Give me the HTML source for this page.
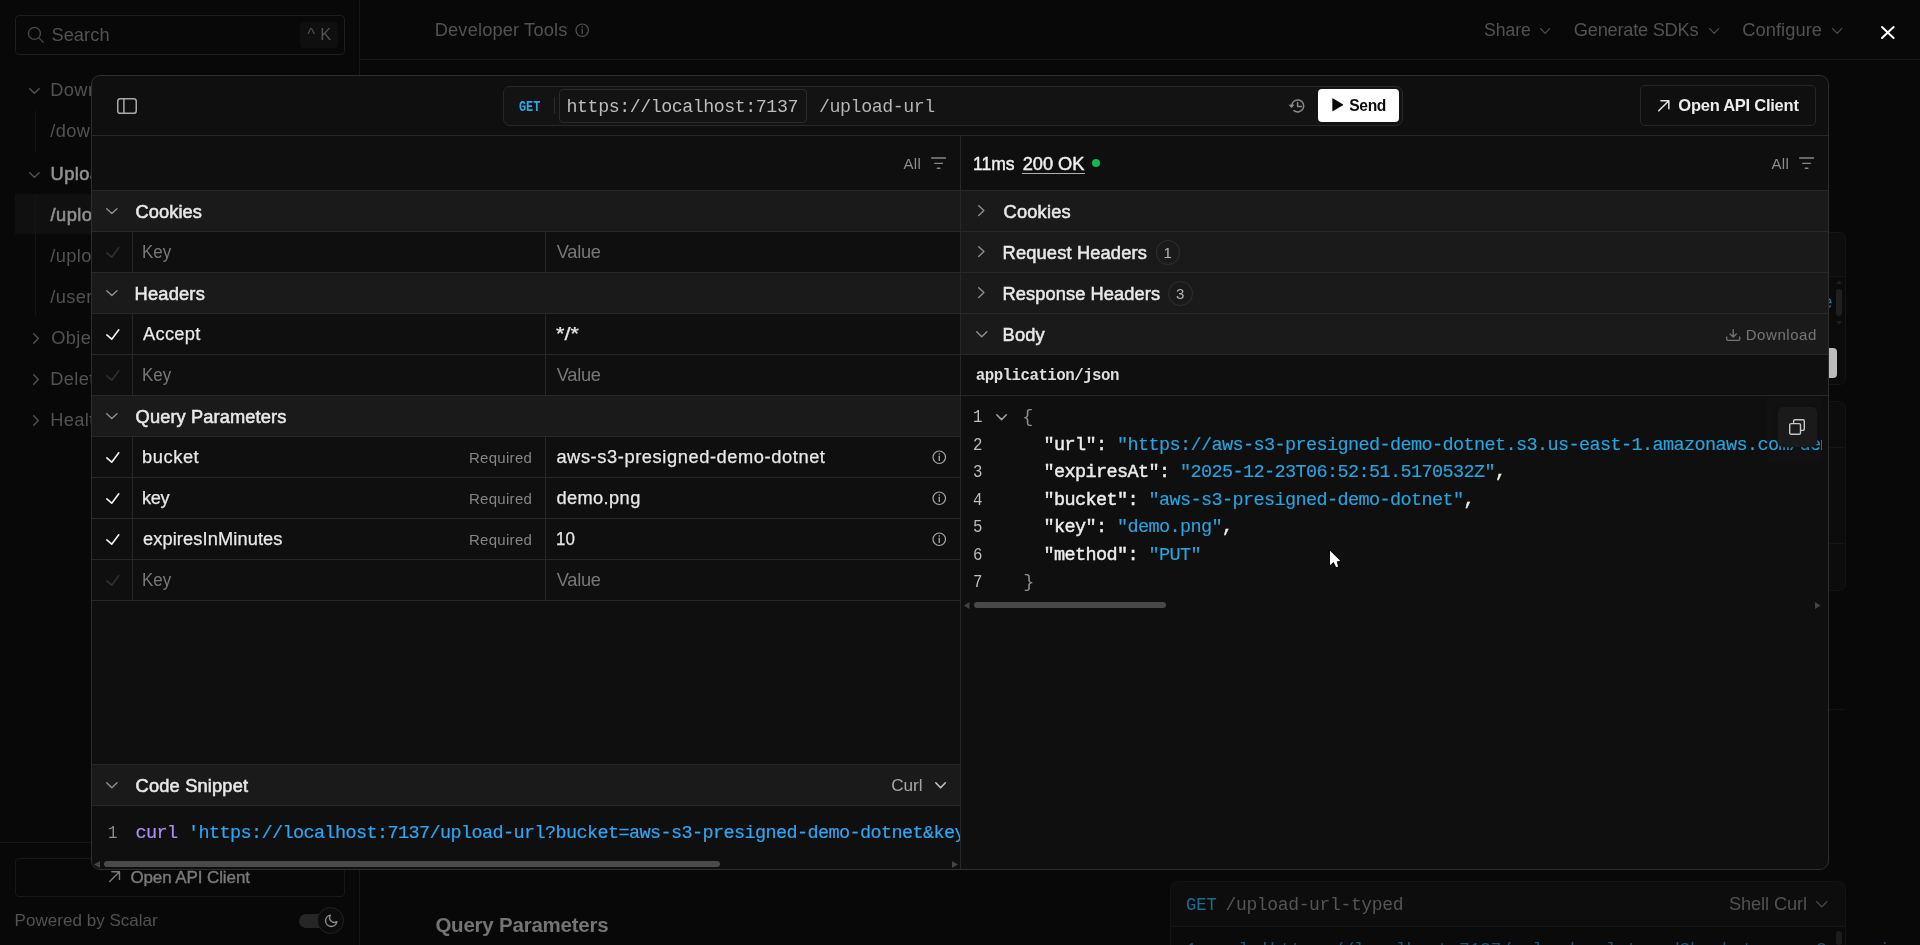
<!DOCTYPE html>
<html lang="en">
<head>
<meta charset="utf-8">
<title>Scalar API Client</title>
<style>
*{box-sizing:border-box;margin:0;padding:0}
html,body{width:1920px;height:945px;overflow:hidden;background:#080808}
body{font-family:"Liberation Sans", sans-serif;font-size:18.25px;color:#e8e8e8;position:relative}
#root{position:absolute;left:0;top:0;width:1920px;height:945px;overflow:hidden;will-change:transform}
.a{position:absolute;white-space:nowrap}
.t{position:absolute;white-space:nowrap;line-height:20px;height:20px}
svg{position:absolute;overflow:visible}
</style>
</head>
<body>
<div id="root">
<div class="a" style="left:359px;top:0px;width:1px;height:945px;background:#171717"></div>
<div class="a" style="left:360px;top:59px;width:1560px;height:1px;background:#171717"></div>
<div class="a" style="left:15px;top:15px;width:330px;height:40px;border:1px solid #1d1d1d;border-radius:4px"></div>
<svg style="left:27px;top:26px" width="18" height="18" viewBox="0 0 18 18" fill="none" stroke="#4c4c4c" stroke-width="1.3" stroke-linecap="round"><circle cx="7.4" cy="7.4" r="6"/><path d="M11.9 11.9l4.2 4.2"/></svg>
<div class="t" style="left:51.40px;top:24.80px;font-size:18.25px;color:#525252;letter-spacing:0.065px;">Search</div>
<div class="a" style="left:300px;top:22px;width:38px;height:26px;background:#0f0f0f;border-radius:4px"></div>
<div class="t" style="left:307.30px;top:24.30px;font-size:16.5px;color:#525252;letter-spacing:0.287px;">^ K</div>
<div class="a" style="left:15px;top:194px;width:77px;height:40px;background:#101010"></div>
<div class="a" style="left:35px;top:111px;width:1px;height:41px;background:#151515"></div>
<div class="a" style="left:35px;top:195px;width:1px;height:121px;background:#151515"></div>
<svg style="left:29.1px;top:88px" width="10.9" height="6" viewBox="0 0 10.9 6" fill="none" stroke="#525252" stroke-width="1.4" stroke-linecap="round" stroke-linejoin="round"><path d="M0.7 0.7L5.45 5.30L10.20 0.7"/></svg>
<div class="t" style="left:50.30px;top:80.00px;font-size:18.25px;color:#525252;letter-spacing:0.360px;">Downloads</div>
<div class="t" style="left:50.30px;top:121.00px;font-size:18.25px;color:#525252;letter-spacing:0.360px;">/download-url</div>
<svg style="left:29.1px;top:171.5px" width="10.9" height="6.0" viewBox="0 0 10.9 6.0" fill="none" stroke="#525252" stroke-width="1.4" stroke-linecap="round" stroke-linejoin="round"><path d="M0.7 0.7L5.45 5.30L10.20 0.7"/></svg>
<div class="t" style="left:50.60px;top:163.50px;font-size:18.25px;color:#909090;letter-spacing:0.450px;-webkit-text-stroke:0.6px #909090;">Uploads</div>
<div class="t" style="left:50.60px;top:204.50px;font-size:18.25px;color:#909090;letter-spacing:0.450px;-webkit-text-stroke:0.6px #909090;">/upload-url</div>
<div class="t" style="left:50.30px;top:245.50px;font-size:18.25px;color:#525252;letter-spacing:0.360px;">/upload-url-typed</div>
<div class="t" style="left:50.30px;top:286.50px;font-size:18.25px;color:#525252;letter-spacing:0.360px;">/users</div>
<svg style="left:32.5px;top:332.5px" width="6.0" height="11.0" viewBox="0 0 6.0 11.0" fill="none" stroke="#525252" stroke-width="1.4" stroke-linecap="round" stroke-linejoin="round"><path d="M0.7 0.7L5.30 5.50L0.7 10.30"/></svg>
<div class="t" style="left:51.30px;top:328.00px;font-size:18.25px;color:#525252;letter-spacing:0.360px;">Objects</div>
<svg style="left:32.5px;top:373.5px" width="6.0" height="11.0" viewBox="0 0 6.0 11.0" fill="none" stroke="#525252" stroke-width="1.4" stroke-linecap="round" stroke-linejoin="round"><path d="M0.7 0.7L5.30 5.50L0.7 10.30"/></svg>
<div class="t" style="left:50.30px;top:369.00px;font-size:18.25px;color:#525252;letter-spacing:0.360px;">Delete</div>
<svg style="left:32.5px;top:414.5px" width="6.0" height="11.0" viewBox="0 0 6.0 11.0" fill="none" stroke="#525252" stroke-width="1.4" stroke-linecap="round" stroke-linejoin="round"><path d="M0.7 0.7L5.30 5.50L0.7 10.30"/></svg>
<div class="t" style="left:50.30px;top:410.00px;font-size:18.25px;color:#525252;letter-spacing:0.360px;">Health</div>
<div class="a" style="left:0px;top:842px;width:359px;height:1px;background:#171717"></div>
<div class="a" style="left:15px;top:858px;width:330px;height:39px;border:1px solid #181818;border-radius:4px"></div>
<svg style="left:108.9px;top:871.2px" width="11.2" height="11.2" viewBox="0 0 11.2 11.2" fill="none" stroke="#7a7a7a" stroke-width="1.4" stroke-linecap="round" stroke-linejoin="round"><path d="M0.7 10.5L10.5 0.7M2.80 0.7H10.5V8.40"/></svg>
<div class="t" style="left:130.40px;top:868.10px;font-size:17px;color:#7a7a7a;letter-spacing:-0.098px;-webkit-text-stroke:0.4px #7a7a7a;">Open API Client</div>
<div class="t" style="left:14.60px;top:910.50px;font-size:17px;color:#525252;letter-spacing:0.030px;">Powered by Scalar</div>
<div class="a" style="left:299px;top:914px;width:34px;height:14px;border-radius:7px;background:#262626"></div>
<div class="a" style="left:317px;top:907px;width:27px;height:27px;border-radius:14px;background:#0c0c0c;border:1px solid #232323"></div>
<svg style="left:324.5px;top:914px" width="13" height="13" viewBox="0 0 13 13" fill="none" stroke="#8c8c8c" stroke-width="1.4" stroke-linecap="round" stroke-linejoin="round"><path d="M5.4 1.1A5.7 5.7 0 1 0 11.9 7.6 4.7 4.7 0 0 1 5.4 1.1z"/></svg>
<div class="t" style="left:434.75px;top:20.10px;font-size:18.25px;color:#525252;letter-spacing:0.144px;">Developer Tools</div>
<svg style="left:574.8px;top:23.0px" width="14.4" height="14.4" viewBox="0 0 14.4 14.4" fill="none" stroke="#525252" stroke-width="1.2" stroke-linecap="round"><circle cx="7.2" cy="7.2" r="6.2"/><path d="M7.2 6.10v4.22" stroke-width="1.3"/><circle cx="7.2" cy="3.91" r="0.8" fill="#525252" stroke="none"/></svg>
<div class="t" style="left:1483.50px;top:20.10px;font-size:18.25px;color:#525252;letter-spacing:0.000px;transform:scaleX(0.9619);transform-origin:0 0;">Share</div>
<svg style="left:1540.3px;top:27.8px" width="10.3" height="6.0" viewBox="0 0 10.3 6.0" fill="none" stroke="#4c4c4c" stroke-width="1.3" stroke-linecap="round" stroke-linejoin="round"><path d="M0.65 0.65L5.15 5.35L9.65 0.65"/></svg>
<div class="t" style="left:1573.80px;top:20.10px;font-size:18.25px;color:#525252;letter-spacing:-0.257px;">Generate SDKs</div>
<svg style="left:1708.5px;top:27.8px" width="10.3" height="6.0" viewBox="0 0 10.3 6.0" fill="none" stroke="#4c4c4c" stroke-width="1.3" stroke-linecap="round" stroke-linejoin="round"><path d="M0.65 0.65L5.15 5.35L9.65 0.65"/></svg>
<div class="t" style="left:1742.20px;top:20.10px;font-size:18.25px;color:#525252;letter-spacing:0.077px;">Configure</div>
<svg style="left:1832px;top:27.8px" width="10.4" height="6.0" viewBox="0 0 10.4 6.0" fill="none" stroke="#4c4c4c" stroke-width="1.3" stroke-linecap="round" stroke-linejoin="round"><path d="M0.65 0.65L5.20 5.35L9.75 0.65"/></svg>
<svg style="left:1880.5px;top:26.3px" width="13.6" height="13" viewBox="0 0 13.6 13" fill="none" stroke="#ffffff" stroke-width="2" stroke-linecap="round"><path d="M1 1L12.6 12M12.6 1L1 12"/></svg>
<div class="t" style="left:435.40px;top:915.00px;font-size:20.5px;color:#747474;letter-spacing:-0.222px;font-weight:bold;">Query Parameters</div>
<div class="a" style="left:1170px;top:881px;width:676px;height:80px;background:#0d0d0d;border:1px solid #141414;border-radius:8px"></div>
<div class="a" style="left:1171px;top:927px;width:674px;height:30px;background:#0a0a0a"></div>
<div class="a" style="left:1171px;top:926px;width:674px;height:1px;background:#161616"></div>
<div class="t" style="left:1185.55px;top:894.80px;font-size:18px;color:#1f6a91;letter-spacing:0.000px;font-family:'Liberation Mono', monospace;transform:scaleX(0.9524);transform-origin:0 0;">GET</div>
<div class="t" style="left:1225.50px;top:894.80px;font-size:18px;color:#555555;letter-spacing:-0.352px;font-family:'Liberation Mono', monospace;">/upload-url-typed</div>
<div class="t" style="left:1728.90px;top:893.80px;font-size:18.25px;color:#525252;letter-spacing:-0.106px;">Shell Curl</div>
<svg style="left:1816px;top:901px" width="11.5" height="6.5" viewBox="0 0 11.5 6.5" fill="none" stroke="#4c4c4c" stroke-width="1.3" stroke-linecap="round" stroke-linejoin="round"><path d="M0.65 0.65L5.75 5.85L10.85 0.65"/></svg>
<div class="t" style="left:1186.00px;top:939.50px;font-size:18px;color:#1b5575;letter-spacing:-0.300px;font-family:'Liberation Mono', monospace;">1  curl &#x27;https://localhost:7137/upload-url-typed?bucket=aws-s3-presigned&#x27;</div>
<div class="a" style="left:1836px;top:931px;width:6px;height:14px;background:#1c1c1c;border-radius:3px"></div>
<div class="a" style="left:1700px;top:232px;width:146px;height:153px;background:#0d0d0d;border:1px solid #151515;border-radius:7px"></div>
<div class="a" style="left:1701px;top:277px;width:144px;height:107px;background:#0b0b0b"></div>
<div class="a" style="left:1829px;top:276px;width:16px;height:1px;background:#151515"></div>
<div class="a" style="left:1829px;top:290px;width:4px;height:24px;overflow:hidden">
<div class="t" style="left:-7.30px;top:4.20px;font-size:18.5px;color:#1e78a6;letter-spacing:0.000px;font-family:'Liberation Mono', monospace;">e</div>
</div>
<div class="a" style="left:1836px;top:289px;width:6px;height:27px;background:#1f1f1f;border-radius:3px"></div>
<svg style="left:1836px;top:280px" width="6" height="4" viewBox="0 0 6 4" ><path d="M3 0L6 4H0z" fill="#1f1f1f"/></svg>
<svg style="left:1836px;top:321px" width="6" height="4" viewBox="0 0 6 4" ><path d="M0 0H6L3 4z" fill="#1f1f1f"/></svg>
<div class="a" style="left:1820px;top:348px;width:17px;height:30px;background:#bcbcbc;border-radius:4px"></div>
<div class="a" style="left:1700px;top:401px;width:146px;height:190px;background:#0c0c0c;border:1px solid #141414;border-radius:7px"></div>
<div class="a" style="left:1829px;top:447px;width:16px;height:1px;background:#151515"></div>
<div class="a" style="left:1829px;top:543px;width:16px;height:1px;background:#151515"></div>
<div class="a" style="left:1829px;top:709px;width:16px;height:1px;background:#131313"></div>
<div class="a" style="left:91px;top:75px;width:1738px;height:795px;background:#0f0f0f;border:1px solid #2e2e2e;border-radius:9px"></div>
<div class="a" style="left:92px;top:135px;width:1736px;height:1px;background:#282828"></div>
<svg style="left:117px;top:98px" width="20" height="16" viewBox="0 0 20 16" fill="none" stroke="#a9a9a9" stroke-width="1.5"><rect x="0.75" y="0.75" width="18.5" height="14.5" rx="2.6"/><path d="M6.9 1v14"/></svg>
<div class="a" style="left:503px;top:86px;width:900px;height:40px;border:1px solid #282828;border-radius:7px;background:#131313"></div>
<div class="t" style="left:519.00px;top:96.70px;font-size:14.5px;color:#2aa8e6;letter-spacing:0.000px;font-family:'Liberation Mono', monospace;font-weight:bold;transform:scaleX(0.8181);transform-origin:0 0;">GET</div>
<div class="a" style="left:554px;top:97px;width:1px;height:17px;background:#2b2b2b"></div>
<div class="a" style="left:559px;top:89px;width:248px;height:34px;border:1px solid #2b2b2b;border-radius:4px"></div>
<div class="t" style="left:566.60px;top:96.90px;font-size:18.25px;color:#bdbdbd;letter-spacing:-0.437px;font-family:'Liberation Mono', monospace;">https://localhost:7137</div>
<div class="t" style="left:819.10px;top:96.90px;font-size:18.25px;color:#b4b4b4;letter-spacing:-0.442px;font-family:'Liberation Mono', monospace;">/upload-url</div>
<svg style="left:1289px;top:98px" width="16" height="16" viewBox="0 0 16 16" ><path d="M2.70 7.90A6.0 6.0 0 1 1 5.01 12.63M8.60 4.50V8.40H12.50" fill="none" stroke="#8a8a8a" stroke-width="1.5" stroke-linecap="round" stroke-linejoin="round"/><path d="M0.10 6.90H5.00L2.60 9.80z" fill="#8a8a8a" stroke="#8a8a8a" stroke-width="0.6" stroke-linejoin="round"/></svg>
<div class="a" style="left:1318px;top:89px;width:81px;height:33px;background:#ffffff;border-radius:4px"></div>
<svg style="left:1331.8px;top:98.3px" width="11.2" height="13.4" viewBox="0 0 11.2 13.4" ><path d="M0.3 0.9v11.6a.6.6 0 0 0 .9.5l9.6-5.8a.6.6 0 0 0 0-1L1.2.4a.6.6 0 0 0-.9.5z" fill="#0b0b0b"/></svg>
<div class="t" style="left:1349.30px;top:96.20px;font-size:15.6px;color:#0b0b0b;letter-spacing:-0.366px;font-weight:bold;">Send</div>
<div class="a" style="left:1640px;top:85px;width:176px;height:41px;border:1px solid #262626;border-radius:5px"></div>
<svg style="left:1658.1px;top:99.5px" width="11.6" height="11.6" viewBox="0 0 11.6 11.6" fill="none" stroke="#e2e2e2" stroke-width="1.5" stroke-linecap="round" stroke-linejoin="round"><path d="M0.75 10.85L10.85 0.75M2.90 0.75H10.85V8.70"/></svg>
<div class="t" style="left:1678.30px;top:95.20px;font-size:16.5px;color:#ececec;letter-spacing:-0.249px;font-weight:bold;">Open API Client</div>
<div class="a" style="left:960px;top:136px;width:1px;height:733px;background:#282828"></div>
<div class="t" style="left:903.50px;top:154.00px;font-size:15px;color:#8c8c8c;letter-spacing:0.281px;">All</div>
<svg style="left:930.9px;top:156.4px" width="16" height="14" viewBox="0 0 16 14" fill="none" stroke="#888888" stroke-width="1.35" stroke-linecap="round"><path d="M0.7 2h13.8M3.7 7.3h7.8M6.3 12.2h2.6"/></svg>
<div class="a" style="left:92px;top:190px;width:868px;height:1px;background:#282828"></div>
<div class="a" style="left:92px;top:191px;width:868px;height:40px;background:#1a1a1a"></div>
<svg style="left:106.2px;top:207.9px" width="11.7" height="6.1" viewBox="0 0 11.7 6.1" fill="none" stroke="#909090" stroke-width="1.4" stroke-linecap="round" stroke-linejoin="round"><path d="M0.7 0.7L5.85 5.40L11.00 0.7"/></svg>
<div class="t" style="left:135.58px;top:201.75px;font-size:18.25px;color:#e8e8e8;letter-spacing:0.074px;-webkit-text-stroke:0.55px #e8e8e8;">Cookies</div>
<div class="a" style="left:92px;top:231px;width:868px;height:1px;background:#282828"></div>
<div class="a" style="left:132px;top:232px;width:1px;height:40px;background:#282828"></div>
<div class="a" style="left:545px;top:232px;width:1px;height:40px;background:#282828"></div>
<svg style="left:105.65px;top:246.95px" width="13.6" height="11.0" viewBox="0 0 13.6 11.0" fill="none" stroke="#303030" stroke-width="1.6" stroke-linecap="round" stroke-linejoin="round"><path d="M0.8 5.94L5.71 10.20L12.80 0.8"/></svg>
<div class="t" style="left:141.92px;top:241.75px;font-size:18.25px;color:#787878;letter-spacing:0.000px;transform:scaleX(0.9275);transform-origin:0 0;">Key</div>
<div class="t" style="left:556.75px;top:241.75px;font-size:18.25px;color:#787878;letter-spacing:-0.293px;">Value</div>
<div class="a" style="left:92px;top:272px;width:868px;height:1px;background:#282828"></div>
<div class="a" style="left:92px;top:273px;width:868px;height:40px;background:#1a1a1a"></div>
<svg style="left:106.2px;top:289.9px" width="11.7" height="6.1" viewBox="0 0 11.7 6.1" fill="none" stroke="#909090" stroke-width="1.4" stroke-linecap="round" stroke-linejoin="round"><path d="M0.7 0.7L5.85 5.40L11.00 0.7"/></svg>
<div class="t" style="left:134.58px;top:283.75px;font-size:18.25px;color:#e8e8e8;letter-spacing:0.199px;-webkit-text-stroke:0.55px #e8e8e8;">Headers</div>
<div class="a" style="left:92px;top:313px;width:868px;height:1px;background:#282828"></div>
<div class="a" style="left:132px;top:314px;width:1px;height:40px;background:#282828"></div>
<div class="a" style="left:545px;top:314px;width:1px;height:40px;background:#282828"></div>
<svg style="left:105.65px;top:328.95px" width="13.6" height="11.0" viewBox="0 0 13.6 11.0" fill="none" stroke="#f4f4f4" stroke-width="1.6" stroke-linecap="round" stroke-linejoin="round"><path d="M0.8 5.94L5.71 10.20L12.80 0.8"/></svg>
<div class="t" style="left:142.97px;top:323.75px;font-size:18.25px;color:#e8e8e8;letter-spacing:0.316px;-webkit-text-stroke:0.25px #e8e8e8;">Accept</div>
<div class="t" style="left:556.42px;top:323.75px;font-size:18.25px;color:#e8e8e8;letter-spacing:0.000px;-webkit-text-stroke:0.25px #e8e8e8;transform:scaleX(1.1866);transform-origin:0 0;">*/*</div>
<div class="a" style="left:92px;top:354px;width:868px;height:1px;background:#282828"></div>
<div class="a" style="left:132px;top:355px;width:1px;height:40px;background:#282828"></div>
<div class="a" style="left:545px;top:355px;width:1px;height:40px;background:#282828"></div>
<svg style="left:105.65px;top:369.95px" width="13.6" height="11.0" viewBox="0 0 13.6 11.0" fill="none" stroke="#303030" stroke-width="1.6" stroke-linecap="round" stroke-linejoin="round"><path d="M0.8 5.94L5.71 10.20L12.80 0.8"/></svg>
<div class="t" style="left:141.92px;top:364.75px;font-size:18.25px;color:#787878;letter-spacing:0.000px;transform:scaleX(0.9275);transform-origin:0 0;">Key</div>
<div class="t" style="left:556.75px;top:364.75px;font-size:18.25px;color:#787878;letter-spacing:-0.293px;">Value</div>
<div class="a" style="left:92px;top:395px;width:868px;height:1px;background:#282828"></div>
<div class="a" style="left:92px;top:396px;width:868px;height:40px;background:#1a1a1a"></div>
<svg style="left:106.2px;top:412.9px" width="11.7" height="6.1" viewBox="0 0 11.7 6.1" fill="none" stroke="#909090" stroke-width="1.4" stroke-linecap="round" stroke-linejoin="round"><path d="M0.7 0.7L5.85 5.40L11.00 0.7"/></svg>
<div class="t" style="left:135.58px;top:406.75px;font-size:18.25px;color:#e8e8e8;letter-spacing:0.112px;-webkit-text-stroke:0.55px #e8e8e8;">Query Parameters</div>
<div class="a" style="left:92px;top:436px;width:868px;height:1px;background:#282828"></div>
<div class="a" style="left:132px;top:437px;width:1px;height:40px;background:#282828"></div>
<div class="a" style="left:545px;top:437px;width:1px;height:40px;background:#282828"></div>
<svg style="left:105.65px;top:451.95px" width="13.6" height="11.0" viewBox="0 0 13.6 11.0" fill="none" stroke="#f4f4f4" stroke-width="1.6" stroke-linecap="round" stroke-linejoin="round"><path d="M0.8 5.94L5.71 10.20L12.80 0.8"/></svg>
<div class="t" style="left:141.97px;top:446.75px;font-size:18.25px;color:#e8e8e8;letter-spacing:0.590px;-webkit-text-stroke:0.25px #e8e8e8;">bucket</div>
<div class="t" style="left:556.38px;top:446.75px;font-size:18.25px;color:#e8e8e8;letter-spacing:0.592px;-webkit-text-stroke:0.25px #e8e8e8;">aws-s3-presigned-demo-dotnet</div>
<div class="t" style="left:469.00px;top:447.90px;font-size:15px;color:#858585;letter-spacing:0.282px;">Required</div>
<svg style="left:931.7px;top:449.85px" width="14.5" height="14.5" viewBox="0 0 14.5 14.5" fill="none" stroke="#a6a6a6" stroke-width="1.2" stroke-linecap="round"><circle cx="7.25" cy="7.25" r="6.25"/><path d="M7.25 6.15v4.25" stroke-width="1.3"/><circle cx="7.25" cy="3.94" r="0.8" fill="#a6a6a6" stroke="none"/></svg>
<div class="a" style="left:92px;top:477px;width:868px;height:1px;background:#282828"></div>
<div class="a" style="left:132px;top:478px;width:1px;height:40px;background:#282828"></div>
<div class="a" style="left:545px;top:478px;width:1px;height:40px;background:#282828"></div>
<svg style="left:105.65px;top:492.95px" width="13.6" height="11.0" viewBox="0 0 13.6 11.0" fill="none" stroke="#f4f4f4" stroke-width="1.6" stroke-linecap="round" stroke-linejoin="round"><path d="M0.8 5.94L5.71 10.20L12.80 0.8"/></svg>
<div class="t" style="left:141.97px;top:487.75px;font-size:18.25px;color:#e8e8e8;letter-spacing:-0.312px;-webkit-text-stroke:0.25px #e8e8e8;">key</div>
<div class="t" style="left:556.38px;top:487.75px;font-size:18.25px;color:#e8e8e8;letter-spacing:0.390px;-webkit-text-stroke:0.25px #e8e8e8;">demo.png</div>
<div class="t" style="left:469.00px;top:488.90px;font-size:15px;color:#858585;letter-spacing:0.282px;">Required</div>
<svg style="left:931.7px;top:490.85px" width="14.5" height="14.5" viewBox="0 0 14.5 14.5" fill="none" stroke="#a6a6a6" stroke-width="1.2" stroke-linecap="round"><circle cx="7.25" cy="7.25" r="6.25"/><path d="M7.25 6.15v4.25" stroke-width="1.3"/><circle cx="7.25" cy="3.94" r="0.8" fill="#a6a6a6" stroke="none"/></svg>
<div class="a" style="left:92px;top:518px;width:868px;height:1px;background:#282828"></div>
<div class="a" style="left:132px;top:519px;width:1px;height:40px;background:#282828"></div>
<div class="a" style="left:545px;top:519px;width:1px;height:40px;background:#282828"></div>
<svg style="left:105.65px;top:533.95px" width="13.6" height="11.0" viewBox="0 0 13.6 11.0" fill="none" stroke="#f4f4f4" stroke-width="1.6" stroke-linecap="round" stroke-linejoin="round"><path d="M0.8 5.94L5.71 10.20L12.80 0.8"/></svg>
<div class="t" style="left:142.97px;top:528.75px;font-size:18.25px;color:#e8e8e8;letter-spacing:0.105px;-webkit-text-stroke:0.25px #e8e8e8;">expiresInMinutes</div>
<div class="t" style="left:556.20px;top:528.75px;font-size:18.25px;color:#e8e8e8;letter-spacing:0.000px;-webkit-text-stroke:0.25px #e8e8e8;transform:scaleX(0.9269);transform-origin:0 0;">10</div>
<div class="t" style="left:469.00px;top:529.90px;font-size:15px;color:#858585;letter-spacing:0.282px;">Required</div>
<svg style="left:931.7px;top:531.85px" width="14.5" height="14.5" viewBox="0 0 14.5 14.5" fill="none" stroke="#a6a6a6" stroke-width="1.2" stroke-linecap="round"><circle cx="7.25" cy="7.25" r="6.25"/><path d="M7.25 6.15v4.25" stroke-width="1.3"/><circle cx="7.25" cy="3.94" r="0.8" fill="#a6a6a6" stroke="none"/></svg>
<div class="a" style="left:92px;top:559px;width:868px;height:1px;background:#282828"></div>
<div class="a" style="left:132px;top:560px;width:1px;height:40px;background:#282828"></div>
<div class="a" style="left:545px;top:560px;width:1px;height:40px;background:#282828"></div>
<svg style="left:105.65px;top:574.95px" width="13.6" height="11.0" viewBox="0 0 13.6 11.0" fill="none" stroke="#303030" stroke-width="1.6" stroke-linecap="round" stroke-linejoin="round"><path d="M0.8 5.94L5.71 10.20L12.80 0.8"/></svg>
<div class="t" style="left:141.92px;top:569.75px;font-size:18.25px;color:#787878;letter-spacing:0.000px;transform:scaleX(0.9275);transform-origin:0 0;">Key</div>
<div class="t" style="left:556.75px;top:569.75px;font-size:18.25px;color:#787878;letter-spacing:-0.293px;">Value</div>
<div class="a" style="left:92px;top:600px;width:868px;height:1px;background:#282828"></div>
<div class="a" style="left:92px;top:764px;width:868px;height:1px;background:#282828"></div>
<div class="a" style="left:92px;top:765px;width:868px;height:40px;background:#1a1a1a"></div>
<div class="a" style="left:92px;top:805px;width:868px;height:1px;background:#282828"></div>
<svg style="left:106.2px;top:781.8px" width="11.7" height="6.4" viewBox="0 0 11.7 6.4" fill="none" stroke="#909090" stroke-width="1.4" stroke-linecap="round" stroke-linejoin="round"><path d="M0.7 0.7L5.85 5.70L11.00 0.7"/></svg>
<div class="t" style="left:135.58px;top:776.25px;font-size:18.25px;color:#e8e8e8;letter-spacing:0.170px;-webkit-text-stroke:0.55px #e8e8e8;">Code Snippet</div>
<div class="t" style="left:891.25px;top:775.20px;font-size:17.2px;color:#a6a6a6;letter-spacing:-0.065px;">Curl</div>
<svg style="left:934.5px;top:782.4px" width="11.2" height="6.6" viewBox="0 0 11.2 6.6" fill="none" stroke="#c4c4c4" stroke-width="1.6" stroke-linecap="round" stroke-linejoin="round"><path d="M0.8 0.8L5.60 5.80L10.40 0.8"/></svg>
<div class="a" style="left:92px;top:806px;width:868px;height:63px;overflow:hidden">
<div class="t" style="left:16.08px;top:17.00px;font-size:19.2px;color:#8e8e8e;letter-spacing:0.000px;font-family:'Liberation Mono', monospace;transform:scaleX(0.8200);transform-origin:0 0;">1</div>
<div class="t" style="left:43.50px;top:18.00px;font-size:18.5px;color:#2ea6f3;letter-spacing:-0.602px;font-family:'Liberation Mono', monospace;-webkit-text-stroke:0.2px #2ea6f3;"><span style="color:#b08df6;-webkit-text-stroke:0.2px #b08df6">curl</span> 'https://localhost:7137/upload-url?bucket=aws-s3-presigned-demo-dotnet&amp;key=demo.png&amp;expiresInMinutes=10'</div>
</div>
<div class="a" style="left:104px;top:861.2px;width:616px;height:6.2px;border-radius:3px;background:#4a4a4a"></div>
<svg style="left:93.5px;top:861px" width="6" height="7" viewBox="0 0 6 7" ><path d="M6 0v7L0 3.5z" fill="#444"/></svg>
<svg style="left:952px;top:861px" width="6" height="7" viewBox="0 0 6 7" ><path d="M0 0v7L6 3.5z" fill="#444"/></svg>
<div class="t" style="left:972.51px;top:153.75px;font-size:18.25px;color:#efefef;letter-spacing:0.000px;-webkit-text-stroke:0.45px #efefef;transform:scaleX(0.9621);transform-origin:0 0;">11ms</div>
<div class="t" style="left:1022.73px;top:153.75px;font-size:18.25px;color:#efefef;letter-spacing:-0.033px;-webkit-text-stroke:0.45px #efefef;">200 OK</div>
<div class="a" style="left:1022px;top:173px;width:63px;height:1px;background:#b0b0b0"></div>
<div class="a" style="left:1091.8px;top:158.6px;width:8.7px;height:8.7px;border-radius:5px;background:#10b84d"></div>
<div class="t" style="left:1771.50px;top:154.00px;font-size:15px;color:#8c8c8c;letter-spacing:0.281px;">All</div>
<svg style="left:1799.3px;top:156.4px" width="16" height="14" viewBox="0 0 16 14" fill="none" stroke="#888888" stroke-width="1.35" stroke-linecap="round"><path d="M0.7 2h13.8M3.7 7.3h7.8M6.3 12.2h2.6"/></svg>
<div class="a" style="left:961px;top:190px;width:867px;height:1px;background:#282828"></div>
<div class="a" style="left:961px;top:191px;width:867px;height:40px;background:#1a1a1a"></div>
<svg style="left:977.6px;top:205.2px" width="6.6" height="11.2" viewBox="0 0 6.6 11.2" fill="none" stroke="#8e8e8e" stroke-width="1.4" stroke-linecap="round" stroke-linejoin="round"><path d="M0.7 0.7L5.90 5.60L0.7 10.50"/></svg>
<div class="t" style="left:1003.57px;top:201.75px;font-size:18.25px;color:#e8e8e8;letter-spacing:0.182px;-webkit-text-stroke:0.55px #e8e8e8;">Cookies</div>
<div class="a" style="left:961px;top:231px;width:867px;height:1px;background:#282828"></div>
<div class="a" style="left:961px;top:232px;width:867px;height:40px;background:#1a1a1a"></div>
<svg style="left:977.6px;top:246.2px" width="6.6" height="11.2" viewBox="0 0 6.6 11.2" fill="none" stroke="#8e8e8e" stroke-width="1.4" stroke-linecap="round" stroke-linejoin="round"><path d="M0.7 0.7L5.90 5.60L0.7 10.50"/></svg>
<div class="t" style="left:1002.57px;top:242.75px;font-size:18.25px;color:#e8e8e8;letter-spacing:0.161px;-webkit-text-stroke:0.55px #e8e8e8;">Request Headers</div>
<div class="a" style="left:1155.5px;top:240.25px;width:24.5px;height:24.5px;border:1px solid #303030;border-radius:13px"></div>
<div class="t" style="left:1163.55px;top:242.80px;font-size:15px;color:#b4b4b4;letter-spacing:0.000px;">1</div>
<div class="a" style="left:961px;top:272px;width:867px;height:1px;background:#282828"></div>
<div class="a" style="left:961px;top:273px;width:867px;height:40px;background:#1a1a1a"></div>
<svg style="left:977.6px;top:287.2px" width="6.6" height="11.2" viewBox="0 0 6.6 11.2" fill="none" stroke="#8e8e8e" stroke-width="1.4" stroke-linecap="round" stroke-linejoin="round"><path d="M0.7 0.7L5.90 5.60L0.7 10.50"/></svg>
<div class="t" style="left:1002.57px;top:283.75px;font-size:18.25px;color:#e8e8e8;letter-spacing:0.086px;-webkit-text-stroke:0.55px #e8e8e8;">Response Headers</div>
<div class="a" style="left:1168.0px;top:281.25px;width:24.5px;height:24.5px;border:1px solid #303030;border-radius:13px"></div>
<div class="t" style="left:1176.05px;top:283.80px;font-size:15px;color:#b4b4b4;letter-spacing:0.000px;">3</div>
<div class="a" style="left:961px;top:313px;width:867px;height:1px;background:#282828"></div>
<div class="a" style="left:961px;top:314px;width:867px;height:40px;background:#1a1a1a"></div>
<svg style="left:975.5px;top:331.2px" width="11.5" height="6.4" viewBox="0 0 11.5 6.4" fill="none" stroke="#909090" stroke-width="1.4" stroke-linecap="round" stroke-linejoin="round"><path d="M0.7 0.7L5.75 5.70L10.80 0.7"/></svg>
<div class="t" style="left:1002.57px;top:324.75px;font-size:18.25px;color:#e8e8e8;letter-spacing:0.143px;-webkit-text-stroke:0.55px #e8e8e8;">Body</div>
<svg style="left:1726.3px;top:329px" width="14.4" height="12" viewBox="0 0 14.4 12" fill="none" stroke="#747474" stroke-width="1.3" stroke-linecap="round" stroke-linejoin="round"><path d="M7.2 0.7v7M4.1 5l3.1 3 3.1-3M0.7 8v2.1a1.2 1.2 0 0 0 1.2 1.2h10.6a1.2 1.2 0 0 0 1.2-1.2V8"/></svg>
<div class="t" style="left:1745.70px;top:325.00px;font-size:15px;color:#767676;letter-spacing:0.562px;">Download</div>
<div class="a" style="left:961px;top:354px;width:867px;height:1px;background:#282828"></div>
<div class="t" style="left:975.75px;top:365.50px;font-size:15.8px;color:#dedede;letter-spacing:-0.530px;font-family:'Liberation Mono', monospace;font-weight:bold;">application/json</div>
<div class="a" style="left:961px;top:395px;width:867px;height:1px;background:#282828"></div>
<div class="a" style="left:961px;top:396px;width:861px;height:205px;overflow:hidden">
<div class="t" style="left:12.08px;top:11.20px;font-size:19.2px;color:#bdbdbd;letter-spacing:0.000px;font-family:'Liberation Mono', monospace;transform:scaleX(0.8200);transform-origin:0 0;">1</div>
<div class="t" style="left:61.25px;top:12.20px;font-size:18.5px;color:#8c8c8c;letter-spacing:-0.602px;font-family:'Liberation Mono', monospace;-webkit-text-stroke:0px #8c8c8c;">{</div>
<div class="t" style="left:12.08px;top:38.70px;font-size:19.2px;color:#bdbdbd;letter-spacing:0.000px;font-family:'Liberation Mono', monospace;transform:scaleX(0.8200);transform-origin:0 0;">2</div>
<div class="t" style="left:82.50px;top:39.70px;font-size:18.5px;color:#ececec;letter-spacing:-0.602px;font-family:'Liberation Mono', monospace;-webkit-text-stroke:0.45px #ececec;">"url": <span style="color:#27a5e1;-webkit-text-stroke:0.15px #27a5e1">"https://aws-s3-presigned-demo-dotnet.s3.us-east-1.amazonaws.com/demo.png?X-Amz-Expires=600"</span>,</div>
<div class="t" style="left:12.08px;top:66.20px;font-size:19.2px;color:#bdbdbd;letter-spacing:0.000px;font-family:'Liberation Mono', monospace;transform:scaleX(0.8200);transform-origin:0 0;">3</div>
<div class="t" style="left:82.50px;top:67.20px;font-size:18.5px;color:#ececec;letter-spacing:-0.602px;font-family:'Liberation Mono', monospace;-webkit-text-stroke:0.45px #ececec;">"expiresAt": <span style="color:#27a5e1;-webkit-text-stroke:0.15px #27a5e1">"2025-12-23T06:52:51.5170532Z"</span>,</div>
<div class="t" style="left:12.08px;top:93.70px;font-size:19.2px;color:#bdbdbd;letter-spacing:0.000px;font-family:'Liberation Mono', monospace;transform:scaleX(0.8200);transform-origin:0 0;">4</div>
<div class="t" style="left:82.50px;top:94.70px;font-size:18.5px;color:#ececec;letter-spacing:-0.602px;font-family:'Liberation Mono', monospace;-webkit-text-stroke:0.45px #ececec;">"bucket": <span style="color:#27a5e1;-webkit-text-stroke:0.15px #27a5e1">"aws-s3-presigned-demo-dotnet"</span>,</div>
<div class="t" style="left:12.08px;top:121.20px;font-size:19.2px;color:#bdbdbd;letter-spacing:0.000px;font-family:'Liberation Mono', monospace;transform:scaleX(0.8200);transform-origin:0 0;">5</div>
<div class="t" style="left:82.50px;top:122.20px;font-size:18.5px;color:#ececec;letter-spacing:-0.602px;font-family:'Liberation Mono', monospace;-webkit-text-stroke:0.45px #ececec;">"key": <span style="color:#27a5e1;-webkit-text-stroke:0.15px #27a5e1">"demo.png"</span>,</div>
<div class="t" style="left:12.08px;top:148.70px;font-size:19.2px;color:#bdbdbd;letter-spacing:0.000px;font-family:'Liberation Mono', monospace;transform:scaleX(0.8200);transform-origin:0 0;">6</div>
<div class="t" style="left:82.50px;top:149.70px;font-size:18.5px;color:#ececec;letter-spacing:-0.602px;font-family:'Liberation Mono', monospace;-webkit-text-stroke:0.45px #ececec;">"method": <span style="color:#27a5e1;-webkit-text-stroke:0.15px #27a5e1">"PUT"</span></div>
<div class="t" style="left:12.08px;top:176.20px;font-size:19.2px;color:#bdbdbd;letter-spacing:0.000px;font-family:'Liberation Mono', monospace;transform:scaleX(0.8200);transform-origin:0 0;">7</div>
<div class="t" style="left:62.25px;top:177.20px;font-size:18.5px;color:#8c8c8c;letter-spacing:-0.602px;font-family:'Liberation Mono', monospace;-webkit-text-stroke:0px #8c8c8c;">}</div>
</div>
<svg style="left:996.3px;top:414.4px" width="11.1" height="6.4" viewBox="0 0 11.1 6.4" fill="none" stroke="#a0a0a0" stroke-width="1.5" stroke-linecap="round" stroke-linejoin="round"><path d="M0.75 0.75L5.55 5.65L10.35 0.75"/></svg>
<div class="a" style="left:1766px;top:397px;width:56px;height:66px;background:rgba(255,255,255,0.012);border-radius:6px"></div>
<div class="a" style="left:1777.5px;top:406.5px;width:39px;height:40px;border-radius:5px;background:#1a1a1a;box-shadow:0 0 3px 1px rgba(15,15,15,0.5)"></div>
<svg style="left:1789px;top:419px" width="16" height="16" viewBox="0 0 16 16" fill="none" stroke="#c6c6c6" stroke-width="1.4" stroke-linejoin="round"><rect x="0.7" y="4.6" width="10.8" height="10.6" rx="1.3"/><path d="M4.6 4.4V2a1.3 1.3 0 0 1 1.3-1.3h8.1a1.3 1.3 0 0 1 1.3 1.3v8.1a1.3 1.3 0 0 1-1.3 1.3h-2.3"/></svg>
<div class="a" style="left:973.75px;top:602.2px;width:192.5px;height:6px;border-radius:3px;background:#484848"></div>
<svg style="left:964.3px;top:601.8px" width="5.5" height="7" viewBox="0 0 5.5 7" ><path d="M5.5 0v7L0 3.5z" fill="#444"/></svg>
<svg style="left:1814.5px;top:601.8px" width="5.5" height="7" viewBox="0 0 5.5 7" ><path d="M0 0v7L5.5 3.5z" fill="#444"/></svg>
<svg style="left:1328px;top:549px" width="14" height="20" viewBox="0 0 14 20" ><path d="M2 1.7L12.2 11.7L8.7 12.4L10.1 17.7L8 17.9L5.6 13.1L2 16.2z" fill="#ffffff" stroke="#050505" stroke-width="1.3" stroke-linejoin="miter" paint-order="stroke"/></svg>
</div>
</body>
</html>
